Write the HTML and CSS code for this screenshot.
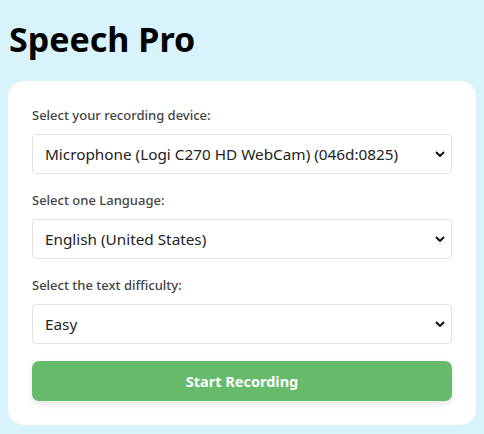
FILE: index.html
```html
<!DOCTYPE html>
<html lang="en">
  <head>
    <meta charset="UTF-8" />
    <meta name="viewport" content="width=device-width, initial-scale=1.0" />
    <title>Speech Pro</title>
    <link rel="stylesheet" href="styles.css">
  </head>
  <body>
    <h1>Speech Pro</h1>

    <div class="card">
      <label for="device">Select your recording device:</label>
      <div class="select-wrap">
        <select id="device">
          <option>Microphone (Logi C270 HD WebCam) (046d:0825)</option>
        </select>
        <svg class="chevron" width="10" height="6" viewBox="0 0 10 6">
          <path d="M1 1l4 4 4-4" fill="none" stroke="#111" stroke-width="2" />
        </svg>
      </div>

      <label for="language">Select one Language:</label>
      <div class="select-wrap">
        <select id="language">
          <option>English (United States)</option>
        </select>
        <svg class="chevron" width="10" height="6" viewBox="0 0 10 6">
          <path d="M1 1l4 4 4-4" fill="none" stroke="#111" stroke-width="2" />
        </svg>
      </div>

      <label for="difficulty">Select the text difficulty:</label>
      <div class="select-wrap">
        <select id="difficulty">
          <option>Easy</option>
        </select>
        <svg class="chevron" width="10" height="6" viewBox="0 0 10 6">
          <path d="M1 1l4 4 4-4" fill="none" stroke="#111" stroke-width="2" />
        </svg>
      </div>

      <button class="start-btn">Start Recording</button>
    </div>
  </body>
</html>
```

FILE: styles.css
```css
* {
  box-sizing: border-box;
}

body {
  margin: 0;
  padding: 8px;
  background-color: #d8f3fa;
  font-family: "Noto Sans", "Open Sans", sans-serif;
  color: #222;
}

h1 {
  margin: 8px 0 0 1px;
  font-size: 34px;
  line-height: 46px;
  font-weight: 700;
  color: #000;
}

.card {
  margin-top: 19px;
  background-color: #fff;
  border-radius: 16px;
  padding: 24px 24px 24px;
  display: flex;
  flex-direction: column;
}

label {
  display: block;
  font-size: 13px;
  line-height: 21px;
  font-weight: 500;
  color: #444;
  margin-bottom: 8px;
}

.select-wrap {
  position: relative;
  margin-bottom: 16px;
}

select {
  width: 100%;
  height: 40px;
  appearance: none;
  border: 1px solid #e2e2e2;
  border-radius: 4px;
  background-color: #fff;
  padding: 0 12px;
  font-family: inherit;
  font-size: 15.3px;
  color: #222;
}

.chevron {
  position: absolute;
  right: 7px;
  top: 17px;
  pointer-events: none;
}

.start-btn {
  margin-top: 1px;
  height: 40px;
  border: none;
  border-radius: 7px;
  background-color: #66bb6a;
  color: #fff;
  font-family: inherit;
  font-size: 14.5px;
  font-weight: 700;
  box-shadow: 0 3px 6px rgba(0, 0, 0, 0.1);
}
```
